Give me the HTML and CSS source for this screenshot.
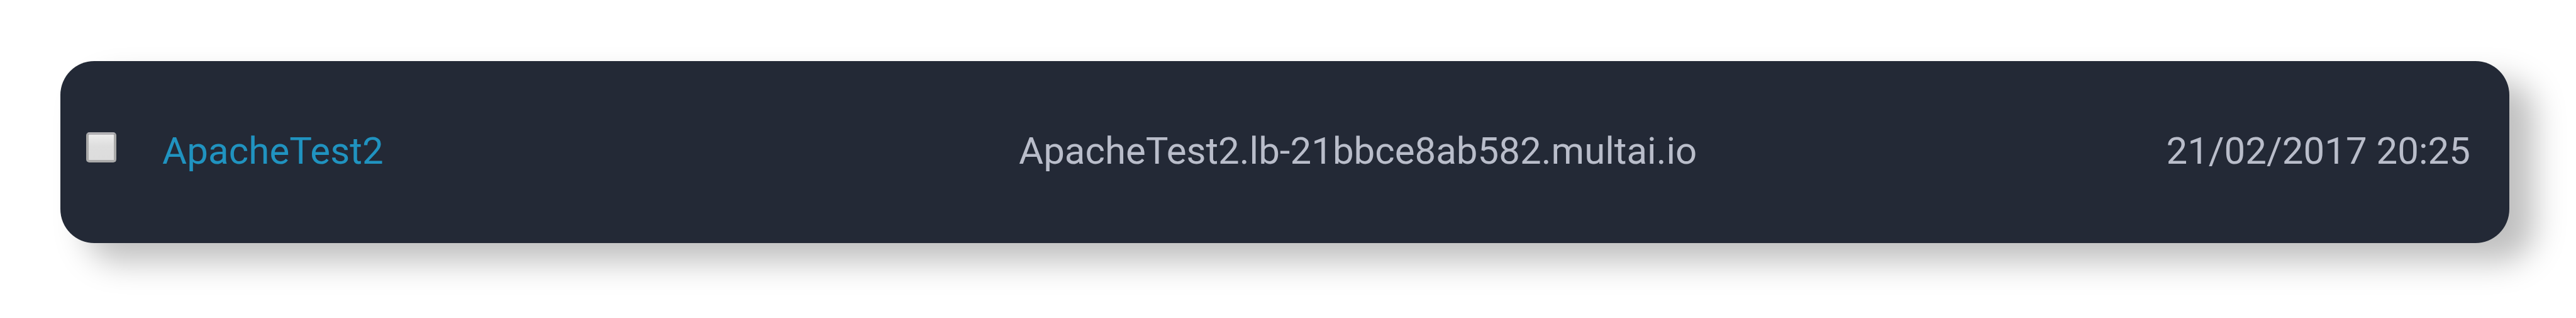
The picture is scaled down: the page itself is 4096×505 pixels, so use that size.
FILE: index.html
```
<!DOCTYPE html>
<html lang="en">
<head>
    <meta charset="UTF-8">
    <meta name="viewport" content="width=device-width, initial-scale=1.0">
    <title>Load Balancers</title>
    <link rel="stylesheet" href="styles.css">
</head>
<body>
    <div class="row">
        <input type="checkbox" class="row-check" aria-label="Select ApacheTest2">
        <a class="row-name" href="#">ApacheTest2</a>
        <span class="row-dns">ApacheTest2.lb-21bbce8ab582.multai.io</span>
        <span class="row-date">21/02/2017 20:25</span>
    </div>
</body>
</html>
```
FILE: styles.css
```
* {
    box-sizing: border-box;
    margin: 0;
    padding: 0;
}
body {
    background-color: #fff;
    font-family: Roboto, 'Liberation Sans', sans-serif;
    padding: 97px 106px 0 96px;
    height: 505px;
    overflow: hidden;
}
.row {
    display: grid;
    grid-template-columns: 121px 1362px 1fr auto;
    align-items: start;
    height: 289px;
    padding: 113px 62px 0 41px;
    border-radius: 54px;
    background-color: #232936;
    box-shadow: 40px 30px 50px rgba(0, 0, 0, 0.25);
    color: #b9bdca;
    font-size: 60px;
    font-weight: 400;
    line-height: 60px;
    white-space: nowrap;
}
.row-check {
    appearance: none;
    width: 48px;
    height: 48px;
    border: 4px solid #aaa;
    border-top-color: #b2b1b5;
    border-radius: 5px;
    background: linear-gradient(#ececec, #dedede 45%, #dcdcdc);
}
.row-name {
    color: #2093c0;
    letter-spacing: 0.1px;
    text-decoration: none;
}
```
